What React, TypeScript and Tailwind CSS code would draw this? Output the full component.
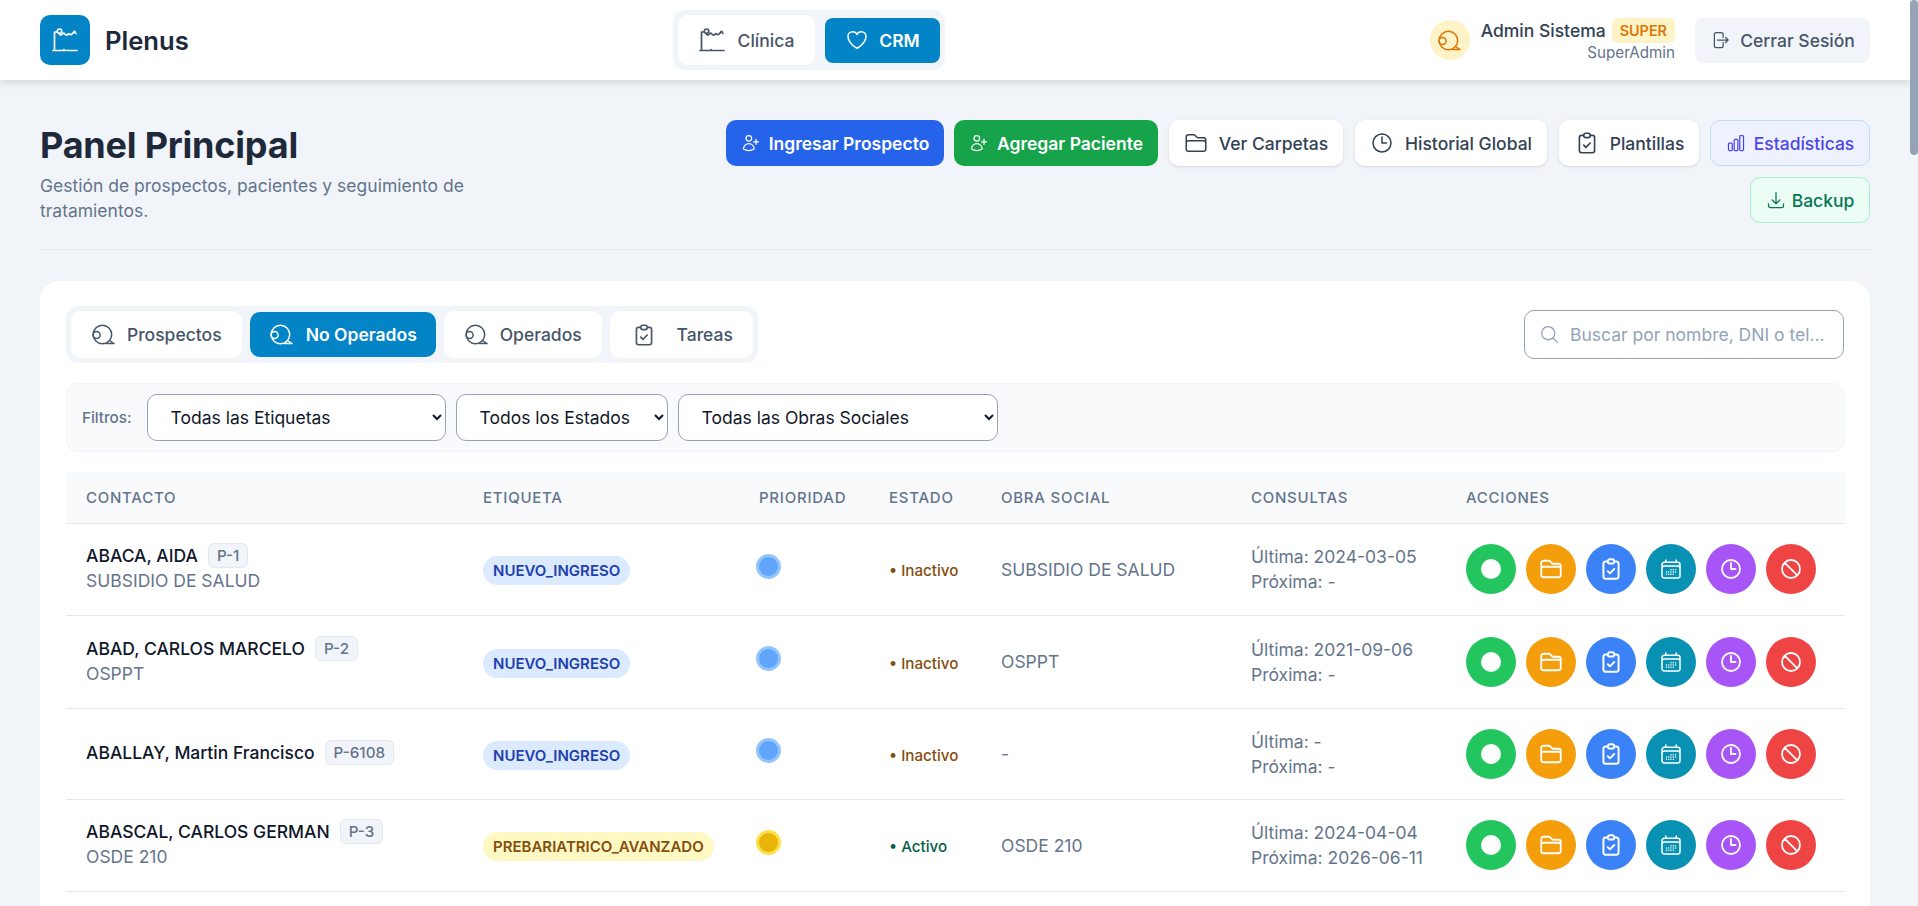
import {
  HiOutlineArrowDownTray,
  HiOutlineArrowRightOnRectangle,
  HiOutlineCalendarDays,
  HiOutlineChartBar,
  HiOutlineClock,
  HiOutlineFolder,
  HiOutlineHeart,
  HiOutlineMagnifyingGlass,
  HiOutlineNoSymbol,
  HiOutlineUserPlus,
} from 'react-icons/hi2';

function LogoIcon({ className }: { className?: string }) {
  return (
    <svg viewBox="0 0 26 24" fill="none" stroke="currentColor" strokeWidth="1.7" strokeLinecap="round" strokeLinejoin="round" className={className}>
      <path d="M5 4H2.5v18" />
      <path d="M1 22.5h24" />
      <path d="M12 21.5v.5" />
      <circle cx="7.5" cy="3.2" r="2.2" />
      <path d="M7.5 5.5c0 1.5 1.5 2 2.5 1s1.5-2 2.5-1 1 2 2.5 1.500 1.500-2 2.500-1 2 1 3-.5l2.500-2" />
      <path d="M22 3.500l2 2" />
    </svg>
  );
}

function PersonIcon({ className }: { className?: string }) {
  return (
    <svg viewBox="0 0 23 21" fill="none" stroke="currentColor" strokeWidth="1.5" strokeLinecap="round" strokeLinejoin="round" className={className}>
      <circle cx="10.400" cy="10.500" r="9.300" />
      <circle cx="4.600" cy="11" r="3.500" />
      <path d="M17.500 16.500l4.500 3h-7.500" />
    </svg>
  );
}

function ClipboardIcon({ className, strokeWidth = 1.5 }: { className?: string; strokeWidth?: number }) {
  return (
    <svg viewBox="0 0 24 24" fill="none" stroke="currentColor" strokeWidth={strokeWidth} strokeLinecap="round" strokeLinejoin="round" className={className}>
      <path d="M9 5H7a2 2 0 00-2 2v12a2 2 0 002 2h10a2 2 0 002-2V7a2 2 0 00-2-2h-2M9 5a2 2 0 002 2h2a2 2 0 002-2M9 5a2 2 0 012-2h2a2 2 0 012 2m-6 9l2 2 4-4" />
    </svg>
  );
}

function Tab({ active, icon, label, className }: { active?: boolean; icon: React.ReactNode; label: string; className: string }) {
  return (
    <button className={`flex items-center justify-center rounded-[10px] ${active ? 'h-[45px] bg-[#0284c7] font-semibold text-white' : 'h-[47px] bg-white font-medium text-[#475569]'} ${className}`}>
      {icon}
      {label}
    </button>
  );
}

function ActionBtn({ className, children }: { className: string; children: React.ReactNode }) {
  return <button className={`flex h-[50px] w-[50px] items-center justify-center rounded-full text-white ${className}`}>{children}</button>;
}

type Row = {
  name: string;
  code: string;
  sub?: string;
  tag: string;
  tagClass: string;
  dotClass: string;
  status: string;
  statusClass: string;
  obra: string;
  last: string;
  next: string;
};

const rows: Row[] = [
  { name: 'ABACA, AIDA', code: 'P-1', sub: 'SUBSIDIO DE SALUD', tag: 'NUEVO_INGRESO', tagClass: 'bg-[#dbeafe] text-[#1e40af]', dotClass: 'bg-[#60a5fa] border-[#93c5fd]', status: 'Inactivo', statusClass: 'text-[#854d0e]', obra: 'SUBSIDIO DE SALUD', last: '2024-03-05', next: '-' },
  { name: 'ABAD, CARLOS MARCELO', code: 'P-2', sub: 'OSPPT', tag: 'NUEVO_INGRESO', tagClass: 'bg-[#dbeafe] text-[#1e40af]', dotClass: 'bg-[#60a5fa] border-[#93c5fd]', status: 'Inactivo', statusClass: 'text-[#854d0e]', obra: 'OSPPT', last: '2021-09-06', next: '-' },
  { name: 'ABALLAY, Martin Francisco', code: 'P-6108', tag: 'NUEVO_INGRESO', tagClass: 'bg-[#dbeafe] text-[#1e40af]', dotClass: 'bg-[#60a5fa] border-[#93c5fd]', status: 'Inactivo', statusClass: 'text-[#854d0e]', obra: '-', last: '-', next: '-' },
  { name: 'ABASCAL, CARLOS GERMAN', code: 'P-3', sub: 'OSDE 210', tag: 'PREBARIATRICO_AVANZADO', tagClass: 'bg-[#fef9c3] text-[#854d0e]', dotClass: 'bg-[#eab308] border-[#fde047]', status: 'Activo', statusClass: 'text-[#065f46]', obra: 'OSDE 210', last: '2024-04-04', next: '2026-06-11' },
];

export default function App() {
  return (
    <div className="relative h-screen overflow-hidden bg-[#f1f5f9] font-['Inter',sans-serif] text-[17.5px] leading-[25px] text-[#1e293b]">
      <div className="absolute right-0 top-0 z-20 h-[155px] w-2 rounded-full bg-[#94a3b8]" />
      <div className="w-[1910px]">
        <header className="relative z-10 flex h-20 items-center bg-white px-10 shadow-[0_2px_8px_rgba(0,0,0,0.15)]">
          <div className="flex w-[633px] items-center gap-[15px]">
            <div className="flex h-[50px] w-[50px] items-center justify-center rounded-[10px] bg-[#0284c7] text-white">
              <LogoIcon className="h-6 w-[26px]" />
            </div>
            <span className="text-[25.6px] font-semibold text-[#1e293b]">Plenus</span>
          </div>
          <div className="flex h-[60px] w-[272px] items-center gap-[10px] rounded-xl bg-[#f1f5f9] px-[5px]">
            <button className="flex h-[50px] w-[137px] items-center justify-center gap-[13px] rounded-[10px] bg-white font-medium text-[#475569]">
              <LogoIcon className="h-6 w-[26px]" />
              Clínica
            </button>
            <button className="flex h-[45px] w-[115px] items-center justify-center gap-[10px] rounded-lg bg-[#0284c7] font-semibold text-white">
              <HiOutlineHeart className="h-6 w-6" />
              CRM
            </button>
          </div>
          <div className="ml-auto flex items-center gap-5">
            <div className="flex items-center gap-[11px]">
              <div className="flex h-10 w-10 items-center justify-center rounded-full bg-[#fef3c7] text-[#d97706]">
                <PersonIcon className="h-[21px] w-[23px]" />
              </div>
              <div className="flex flex-col items-end">
                <div className="flex items-center gap-[6px]">
                  <span className="font-medium text-[#334155]">Admin Sistema</span>
                  <span className="rounded-md bg-[#fef3c7] px-2 text-[14.4px] font-semibold leading-[25px] text-[#d97706]">SUPER</span>
                </div>
                <span className="text-[15.2px] leading-[20px] text-[#64748b]">SuperAdmin</span>
              </div>
            </div>
            <button className="flex h-[45px] w-[175px] items-center justify-center gap-[10px] rounded-lg bg-[#f1f5f9] font-medium text-[#475569]">
              <HiOutlineArrowRightOnRectangle className="h-5 w-5" />
              Cerrar Sesión
            </button>
          </div>
        </header>

        <main className="px-10 pt-10">
          <div className="flex items-start justify-between border-b border-[#e2e8f0] pb-[26px]">
            <div className="w-[480px] pt-[3px]">
              <h1 className="text-4xl font-bold leading-[44px] tracking-[-0.2px] text-[#1e293b]">Panel Principal</h1>
              <p className="mt-[6px] text-[#64748b]">Gestión de prospectos, pacientes y seguimiento de tratamientos.</p>
            </div>
            <div className="flex w-[1150px] flex-wrap justify-end gap-x-[10px] gap-y-[11px]">
              <button className="flex h-[46px] w-[218px] items-center justify-center gap-2 rounded-[10px] bg-[#2563eb] font-semibold text-white">
                <HiOutlineUserPlus className="h-5 w-5" />
                Ingresar Prospecto
              </button>
              <button className="flex h-[46px] w-[204px] items-center justify-center gap-2 rounded-[10px] bg-[#16a34a] font-semibold text-white">
                <HiOutlineUserPlus className="h-5 w-5" />
                Agregar Paciente
              </button>
              <button className="ml-px flex h-[46px] w-[174px] items-center justify-center gap-[11px] rounded-[10px] bg-white font-medium text-[#334155] shadow-[0_1px_3px_rgba(148,163,184,0.35)]">
                <HiOutlineFolder className="h-6 w-6" />
                Ver Carpetas
              </button>
              <button className="ml-[2px] flex h-[46px] w-[192px] items-center justify-center gap-[11px] rounded-[10px] bg-white font-medium text-[#334155] shadow-[0_1px_3px_rgba(148,163,184,0.35)]">
                <HiOutlineClock className="h-6 w-6" />
                Historial Global
              </button>
              <button className="ml-[2px] flex h-[46px] w-[140px] items-center justify-center gap-[10px] rounded-[10px] bg-white font-medium text-[#334155] shadow-[0_1px_3px_rgba(148,163,184,0.35)]">
                <ClipboardIcon className="h-[26px] w-[26px]" />
                Plantillas
              </button>
              <button className="ml-px flex h-[46px] w-[160px] items-center justify-center gap-2 rounded-[10px] border border-[#bfdbfe] bg-[#eef2ff] font-medium text-[#4f46e5]">
                <HiOutlineChartBar className="h-5 w-5" />
                Estadísticas
              </button>
              <button className="flex h-[46px] w-[120px] items-center justify-center gap-[6px] rounded-[10px] border border-[#a7f3d0] bg-[#ecfdf5] font-medium text-[#047857]">
                <HiOutlineArrowDownTray className="h-5 w-5" />
                Backup
              </button>
            </div>
          </div>

          <section className="mt-[31px] rounded-[20px] bg-white pb-[200px] pl-[26px] pr-[25px] pt-[25px]">
            <div className="flex items-center justify-between">
              <div className="flex h-[57px] w-[692px] items-center gap-2 rounded-xl bg-[#f1f5f9] px-[5px]">
                <Tab icon={<PersonIcon className="h-[21px] w-[23px]" />} label="Prospectos" className="w-[172px] gap-3" />
                <Tab active icon={<PersonIcon className="h-[21px] w-[23px]" />} label="No Operados" className="w-[186px] gap-[13px]" />
                <Tab icon={<PersonIcon className="h-[21px] w-[23px]" />} label="Operados" className="w-[159px] gap-3" />
                <Tab icon={<ClipboardIcon className="h-[26px] w-[26px]" />} label="Tareas" className="w-[143px] gap-5" />
              </div>
              <div className="mr-px flex h-[49px] w-[320px] items-center gap-[10px] rounded-[10px] border border-[#94a3b8] bg-white pl-[14px] pr-3">
                <HiOutlineMagnifyingGlass className="h-[21px] w-[21px] shrink-0 text-[#94a3b8]" />
                <input placeholder="Buscar por nombre, DNI o tel..." className="w-full outline-none placeholder:text-[#94a3b8]" />
              </div>
            </div>

            <div className="mt-5 flex h-[69px] items-center gap-[10px] rounded-xl border border-[#f1f5f9] bg-[#f8fafc] pl-[15px]">
              <span className="mr-[5px] text-[15.2px] font-medium text-[#64748b]">Filtros:</span>
              <select className="h-[47px] w-[299px] rounded-[10px] border border-[#94a3b8] bg-white pl-[19px] pr-1 text-[#0f172a]">
                <option>Todas las Etiquetas</option>
              </select>
              <select className="h-[47px] w-[212px] rounded-[10px] border border-[#94a3b8] bg-white pl-[19px] pr-1 text-[#0f172a]">
                <option>Todos los Estados</option>
              </select>
              <select className="h-[47px] w-[320px] rounded-[10px] border border-[#94a3b8] bg-white pl-[19px] pr-1 text-[#0f172a]">
                <option>Todas las Obras Sociales</option>
              </select>
            </div>

            <table className="mt-5 w-full table-fixed">
              <colgroup>
                <col className="w-[397px]" />
                <col className="w-[276px]" />
                <col className="w-[130px]" />
                <col className="w-[112px]" />
                <col className="w-[250px]" />
                <col className="w-[215px]" />
                <col />
              </colgroup>
              <thead>
                <tr className="border-b border-[#e2e8f0] bg-[#f8fafc] text-left text-[15px] uppercase tracking-[0.05em] text-[#64748b]">
                  <th className="h-[51px] px-5 font-medium">Contacto</th>
                  <th className="px-5 font-medium">Etiqueta</th>
                  <th className="px-5 font-medium">Prioridad</th>
                  <th className="px-5 font-medium">Estado</th>
                  <th className="px-5 font-medium">Obra Social</th>
                  <th className="px-5 font-medium">Consultas</th>
                  <th className="px-5 font-medium">Acciones</th>
                </tr>
              </thead>
              <tbody>
                {rows.map((r) => (
                  <tr key={r.code} className="border-b border-[#e2e8f0]">
                    <td className="px-5 pb-[21px] pt-[19px]">
                      <div className="flex h-[26.500px] items-center gap-[10px]">
                        <span className="font-medium text-[#0f172a]">{r.name}</span>
                        <span className="rounded-md border border-[#e2e8f0] bg-[#f1f5f9] px-2 text-[15.2px] font-medium leading-[23px] text-[#64748b]">{r.code}</span>
                      </div>
                      {r.sub && <div className="-mt-px mb-px text-[#64748b]">{r.sub}</div>}
                    </td>
                    <td className="px-5 pt-[3px]">
                      <span className={`inline-block rounded-full px-[10px] text-[15px] font-semibold leading-[29px] ${r.tagClass}`}>{r.tag}</span>
                    </td>
                    <td className="px-5">
                      <div className={`-ml-[3px] -mt-[6px] h-[25px] w-[25px] rounded-full border-[3px] ${r.dotClass}`} />
                    </td>
                    <td className="px-5 pt-[2px]">
                      <span className={`text-[15.2px] font-medium ${r.statusClass}`}>• {r.status}</span>
                    </td>
                    <td className="px-5 text-[#64748b]">{r.obra}</td>
                    <td className="px-5 py-5 text-[#64748b]">
                      <div>Última: {r.last}</div>
                      <div>Próxima: {r.next}</div>
                    </td>
                    <td className="px-5">
                      <div className="flex gap-[10px]">
                        <ActionBtn className="bg-[#22c55e]">
                          <span className="h-5 w-5 rounded-full bg-white" />
                        </ActionBtn>
                        <ActionBtn className="bg-[#f59e0b]">
                          <HiOutlineFolder className="h-6 w-6" strokeWidth={1.8} />
                        </ActionBtn>
                        <ActionBtn className="bg-[#3b82f6]">
                          <ClipboardIcon className="h-[26px] w-[26px]" strokeWidth={1.8} />
                        </ActionBtn>
                        <ActionBtn className="bg-[#0891b2]">
                          <HiOutlineCalendarDays className="h-6 w-6" />
                        </ActionBtn>
                        <ActionBtn className="bg-[#a855f7]">
                          <HiOutlineClock className="h-6 w-6" strokeWidth={1.8} />
                        </ActionBtn>
                        <ActionBtn className="bg-[#ef4444]">
                          <HiOutlineNoSymbol className="h-6 w-6" strokeWidth={1.8} />
                        </ActionBtn>
                      </div>
                    </td>
                  </tr>
                ))}
              </tbody>
            </table>
          </section>
        </main>
      </div>
    </div>
  );
}
